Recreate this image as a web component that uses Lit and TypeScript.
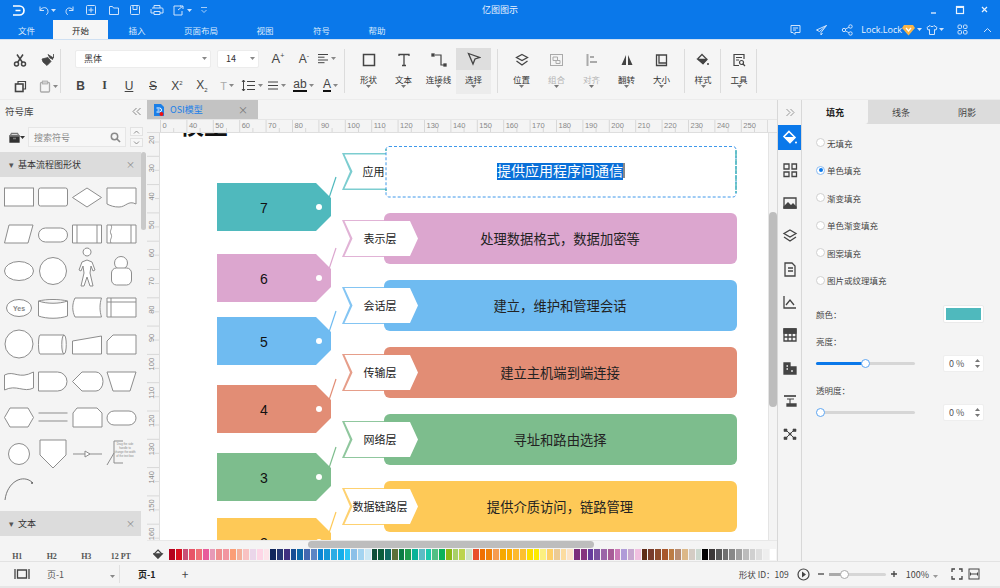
import { LitElement, html, css, svg } from 'lit'
import { customElement } from 'lit/decorators.js'

const ic = (w: number, h: number, body: unknown, cls = '') => html`<svg class=${cls} width=${w} height=${h} viewBox="0 0 ${w} ${h}" fill="none" stroke="currentColor" stroke-width="1.3">${body}</svg>`

const caret = html`<svg class="caret" width="5" height="3" viewBox="0 0 5 3"><path d="M0 0h5L2.5 3z" fill="currentColor"/></svg>`

const PALETTE = [
  ['#b5001c', '#d9101f', '#c94f76', '#e85467', '#ef6f76', '#e85c9b', '#e799b6', '#ef8e8e', '#f295a0', '#fb9e76', '#f4b09b', '#f9c2c2', '#ebd6ea', '#fdd6e6', '#fde4ea'],
  ['#10265c', '#243672', '#3f3080', '#174e94', '#0d69a8', '#4468b0', '#5b85c4', '#0a84d4', '#1496d8', '#2cace4', '#14aeea', '#2cc6f6', '#8cc0e8', '#a4d4f0', '#cce8f4'],
  ['#0f4e38', '#0a5c3a', '#0f6a60', '#5e7038', '#0a7c44', '#1f9c4c', '#0ab298', '#5cbcc4', '#1cc9ac', '#52bf84', '#0ab25a', '#8cb818', '#a8d068', '#bcd44c', '#cfe4c8'],
  ['#e8502a', '#f07000', '#f08008', '#f69c50', '#f6a800', '#fcae00', '#fdb92e', '#fdc030', '#fede00', '#fdec00', '#fcf080', '#fed068', '#eccb94', '#fcdca0', '#fde4c8'],
  ['#7c2f7c', '#85357f', '#663c9c', '#7a519f', '#9c66a8', '#a85c98', '#cc7cb8', '#b09cd8', '#c8a8d0', '#f0c0e0'],
  ['#5e2c18', '#783c2c', '#8f4c2c', '#a8582c', '#bc7c44', '#b88c70', '#dcb888', '#d4ccc4', '#ccd8d0'],
  ['#000000', '#3c3838', '#585858', '#707070', '#888888', '#a0a0a0', '#bcbcbc', '#d0d0d0', '#dedede', '#eeeeee', '#ffffff'],
]

const LAYERS = [
  { n: '6', tag: 254, label: '表示层', bar: 213, text: '处理数据格式，数据加密等', color: '#dca6cf' },
  { n: '5', tag: 317, label: '会话层', bar: 280, text: '建立，维护和管理会话', color: '#6fbbf1' },
  { n: '4', tag: 385, label: '传输层', bar: 347, text: '建立主机端到端连接', color: '#e28d75' },
  { n: '3', tag: 453, label: '网络层', bar: 414, text: '寻址和路由选择', color: '#7dbd8d' },
  { n: '2', tag: 518, label: '数据链路层', bar: 481, text: '提供介质访问，链路管理', color: '#fec957' },
]

const tag = (n: string, y: number, c: string) => svg`
  <path d="M217 ${y}H316L331 ${y + 15}V${y + 33}L316 ${y + 48}H217Z" fill=${c}/>
  <circle cx="319" cy=${y + 24} r="3" fill="#fff"/>
  <path d="M336 ${y - 6}L329 ${y + 15}" stroke=${c} stroke-width="1.2"/>
  <text x="264" y=${y + 30} class="num">${n}</text>`

const chevron = (y: number, c: string) => svg`
  <path d="M342 ${y}H410L418 ${y + 18.5}L410 ${y + 37}H342L350 ${y + 18.5}Z" fill=${c} opacity="0.85"/>
  <path d="M344.5 ${y + 1}H410L418 ${y + 18.5}L410 ${y + 36}H344.5L352.5 ${y + 18.5}Z" fill="#fff"/>`

const leftShapes = svg`
  <g fill="#fff" stroke="#8d8d8d" stroke-width="1">
    <rect x="4.5" y="89" width="29" height="18"/>
    <rect x="38.5" y="89" width="29" height="18" rx="2"/>
    <path d="M87 89l14.5 9.5L87 108 72.5 98.5Z"/>
    <path d="M107 89h29v16c-8-4-10 3-17 3-5 0-8-1-12-3Z"/>
    <path d="M9 126h24l-5 18H4.500Z"/>
    <rect x="38.5" y="129" width="29" height="14" rx="7"/>
    <path d="M72.5 126h29v18h-29ZM77 126v18M97 126v18"/>
    <path d="M107 126h29v18h-29ZM111 126c2 4-2 5 0 9s-2 5 0 9M131 126v18"/>
    <ellipse cx="19" cy="172" rx="14.5" ry="9.500"/>
    <circle cx="53" cy="172" r="13.5"/>
    <path d="M87 157a4 4 0 1 1 .1 0ZM82 163l5-2 5 2 3 8-2 1-2-5-1 7 3 13h-3l-3-9-3 9h-3l3-13-1-7-2 5-2-1Z"/>
    <circle cx="121" cy="164" r="6.5"/>
    <rect x="111.5" y="169" width="20" height="17" rx="5"/>
    <ellipse cx="19" cy="209" rx="12.5" ry="8.500"/>
    <path d="M38.5 202c8-2 21-2 29 0v15c-8 3-21 3-29 0ZM38.5 202c8 3 21 3 29 0"/>
    <path d="M75 199h26.500c-2 6-2 13 0 19H75c-3-6-3-13 0-19Z"/>
    <path d="M107 199h29v19h-29ZM107 203h29M111 199v19"/>
    <circle cx="19" cy="245" r="14"/>
    <path d="M40 236h24c3 0 3 19 0 19H40c-2 0-2-19 0-19ZM64 236c-3 0-3 19 0 19"/>
    <path d="M72.5 242l29-5v18h-29Z"/>
    <path d="M113 236h23v19h-29v-13Z"/>
    <path d="M4.5 276c10-5 14 5 29-3v16c-10 5-17-4-29 2Z"/>
    <path d="M38.5 273h19a9.500 9.500 0 0 1 0 19h-19Z"/>
    <path d="M82 273h14a7 9.500 0 0 1 0 19H82l-9.500-9.500Z"/>
    <path d="M107 273h29l-6 19h-17Z"/>
    <path d="M10 309h18l5.500 9.500L28 328H10l-5.500-9.500Z"/>
    <path d="M38.5 314h29M38.5 322h29" fill="none"/>
    <path d="M77 309h20l5 5v14h-29v-14Z"/>
    <rect x="107" y="312" width="29" height="14" rx="7"/>
    <circle cx="19" cy="355" r="10.5"/>
    <path d="M40 341h26v15l-13 13-13-13Z"/>
    <path d="M73 355h29" fill="none"/>
    <path d="M85 352v6l5-3Z"/>
    <path d="M123 342h-9v22h9M114 354l-7 12" fill="none"/>
  </g>
  <path d="M5 401c2-18 18-27 28-17" fill="none" stroke="#777"/>
  <circle cx="32" cy="384" r="1" fill="#666"/>
  <text x="19" y="212" class="yes">Yes</text>
  <g class="tiny">
    <text x="125" y="346">Drag the side</text>
    <text x="125" y="350">handle to</text>
    <text x="125" y="354">change the width</text>
    <text x="125" y="358">of the text box</text>
  </g>`

const RAIL_ICONS = [
  svg`<path d="M3 3h5v5H3zM11 3h4.500v5H11zM3 11h5v4.500H3zM11 11h4.500v4.500H11z"/>`,
  svg`<path d="M3 4h12v10H3z"/><path d="M3 13l4-4 3 3 2-2 3 3v1H3z" fill="currentColor"/>`,
  svg`<path d="M9 3l6 3.500-6 3.500-6-3.500zM3 10l6 4 6-4"/>`,
  svg`<path d="M4 3h7l3 3v10H4zM7 8h5M7 11h5"/>`,
  svg`<path d="M3 3v12h12"/><path d="M5 12l4-5 4 5"/>`,
  svg`<path d="M3 3h12v12H3zM3 7h12M7 7v8M11 7v8M3 11h12"/><path d="M3 3h12v4H3z" fill="currentColor"/>`,
  svg`<path d="M3 4h6v4h6v7H3z" fill="currentColor"/><path d="M5.500 7h1.500M5.500 10h1.500M11 11v2" stroke="#f4f4f4"/>`,
  svg`<path d="M3 4h12" stroke-width="1.700"/><path d="M6 7h7M9 7v5" stroke-width="1.100"/><path d="M6 12h9v2H6z" fill="currentColor"/>`,
  svg`<path d="M5 5l8 8M13 5l-8 8" stroke-width="1"/><path d="M3 4h3v2.500H3zM12 4h3v2.500h-3zM3 12h3v2.500H3zM12 12h3v2.500h-3zM8 8h2v2H8z" fill="currentColor" stroke-width=".6"/>`,
]

@customElement('app-root')
export class AppRoot extends LitElement {
  static styles = css`
    :host {
      display: block;
      width: 1000px;
      height: 588px;
      overflow: hidden;
      background: #f4f4f4;
      color: #333;
      font: 8.5px "Noto Sans CJK SC", "Liberation Sans", sans-serif;
    }
    .titlebar {
      height: 20px;
      background: #0a78ea;
      color: #fff;
      display: flex;
      align-items: center;
      position: relative;
    }
    .logo { margin-left: 13px; }
    .quick { display: flex; align-items: center; margin-left: 12px; color: #cfe3fb; }
    .quick > div { display: flex; align-items: center; gap: 2px; }
    .title { position: absolute; left: 0; right: 0; text-align: center; font-size: 9px; line-height: 20px; color: #e8f2fd; }
    .winbtns { margin-left: auto; display: flex; color: #e8f2fd; margin-right: 9px; gap: 13px; }
    .tabs {
      height: 19px;
      background: #0a78ea;
      display: flex;
      color: #dcebfc;
      align-items: stretch;
    }
    .tab { display: flex; align-items: center; justify-content: center; width: 53px; }
    .tab.on { background: #f6f6f6; color: #222; width: 55px; }
    .tab-r { margin-left: auto; display: flex; align-items: center; color: #cfe3fb; margin-right: 8px; }
    .tab-r .lock { color: #e8f2fd; font-size: 9px; font-family: "Open Sans", "Liberation Sans", sans-serif; }
    .ribbon {
      height: 61px;
      box-sizing: border-box;
      border-top: 1px solid #cfe0f2;
      border-bottom: 1px solid #ececec;
      background: #f5f5f5;
      display: flex;
      padding: 8px 0 5px;
      color: #444;
    }
    .group { border-right: 1px solid #dcdcdc; display: flex; height: 44px; margin-top: 1px; }
    .clip { width: 61px; display: grid; grid-template-columns: 28px 28px; grid-auto-rows: 26px; justify-items: center; align-items: center; padding-left: 6px; box-sizing: border-box; }
    .clip > * { margin-top: -4px; }
    .font { width: 284px; display: flex; flex-direction: column; padding-left: 14px; box-sizing: border-box; gap: 8px; }
    .frow { display: flex; align-items: center; height: 19px; flex: none; }
    .frow > * { flex: none; }
    .combo { height: 18px; background: #fff; border: 1px solid #ececec; border-radius: 2px; box-sizing: border-box; display: flex; align-items: center; justify-content: space-between; padding: 0 3px 0 8px; color: #333; font-size: 9px; }
    .combo .caret { color: #888; }
    .fb { display: flex; align-items: center; justify-content: center; color: #444; gap: 2px; }
    .fb .caret { color: #888; }
    .big { width: 35px; height: 46px; display: flex; flex-direction: column; align-items: center; margin-top: -1px; padding-top: 2px; box-sizing: border-box; color: #444; }
    .big .lab { margin-top: 3px; line-height: 12px; color: #333; }
    .big .caret { color: #777; }
    .big .ico { height: 20px; display: flex; align-items: center; }
    .big.on { background: #ececec; }
    .big.on .ico { background: #dedede; width: 100%; justify-content: center; height: 22px; margin-top: -2px; }
    .big.off { color: #aaa; }
    .big.off .lab { color: #b4b4b4; }
    .shapesg { padding-left: 6px; width: 153px; box-sizing: border-box; }
    .arrange { padding-left: 6px; width: 187px; box-sizing: border-box; }
    .one { width: 36px; justify-content: center; padding-left: 1px; box-sizing: border-box; }
    .main { height: 461px; display: flex; }
    .lib { width: 147px; position: relative; flex: none; overflow: hidden; }
    .libtop { height: 22px; display: flex; align-items: center; justify-content: space-between; padding: 0 5px; font-size: 9.5px; color: #444; }
    .search { height: 30px; display: flex; align-items: center; padding-left: 9px; }
    .sbox { width: 98px; height: 20px; margin-left: 3px; background: #f7f7f7; border: 1px solid #e6e6e6; box-sizing: border-box; color: #8a8a8a; display: flex; align-items: center; justify-content: space-between; padding: 0 4px 0 5px; font-size: 9px; }
    .updn { display: flex; flex-direction: column; margin-left: 4px; gap: 2px; color: #777; }
    .updn div { width: 13px; height: 9px; border: 1px solid #e2e2e2; display: flex; align-items: center; justify-content: center; box-sizing: border-box; background: #f7f7f7; }
    .sec { width: 141px; height: 25px; background: #dcdcdc; box-sizing: border-box; padding: 0 6px 0 9px; display: flex; align-items: center; color: #333; font-size: 9px; gap: 4px; }
    .sec .x { margin-left: auto; color: #888; font-size: 9px; }
    .sec .tri { color: #555; }
    .shapes { display: block; }
    .libthumb { position: absolute; right: 1px; top: 52px; width: 5px; height: 78px; background: #c9c9c9; border-radius: 3px; }
    .hs { width: 141px; display: flex; padding-top: 17px; font-size: 8px; line-height: 8px; color: #555; font-weight: 700; font-family: "Liberation Serif", serif; }
    .hs span { width: 34.5px; text-align: center; }
    .center { width: 630px; flex: none; display: flex; flex-direction: column; }
    .doctabs { height: 19px; display: flex; background: #f4f4f4; }
    .doctab { width: 111px; background: #c3c3c3; display: flex; align-items: center; padding-left: 7px; gap: 6px; box-sizing: border-box; color: #1a7fe8; font-size: 9px; }
    .doctab .x { margin-left: auto; margin-right: 10px; color: #777; font-size: 10px; }
    .hr { height: 14px; background: #f4f4f4; border-top: 1px solid #e6e6e6; border-bottom: 1px solid #dedede; box-sizing: border-box; }
    .hr svg { display: block; }
    .midrow { height: 407px; display: flex; }
    .vr { width: 13px; flex: none; background: #f4f4f4; border-right: 1px solid #dedede; box-sizing: border-box; }
    .vr svg { display: block; }
    .canvas { width: 608px; height: 407px; background: #fff; flex: none; overflow: hidden; }
    .canvas svg { display: block; }
    .num { font: 14px "Liberation Sans", sans-serif; text-anchor: middle; fill: #111; }
    .lbl { font: 11px "Noto Sans CJK SC", sans-serif; text-anchor: middle; fill: #222; }
    .bartxt { font: 13.3px "Noto Sans CJK SC", sans-serif; text-anchor: middle; fill: #222; }
    .seltxt { font-size: 14px; fill: #fff; }
    .heading { font: 700 24px "Noto Sans CJK SC", sans-serif; fill: #111; }
    .yes { font: 700 7px "Liberation Sans", sans-serif; text-anchor: middle; fill: #888; stroke: none; }
    .tiny text { font: 2.8px "Liberation Sans", sans-serif; text-anchor: middle; fill: #888; }
    .vs { width: 9px; flex: none; background: #f4f4f4; border-left: 1px solid #e4e4e4; box-sizing: border-box; position: relative; }
    .vthumb { position: absolute; left: 0; top: 79px; width: 8px; height: 195px; background: #bdbdbd; border-radius: 4px; }
    .hscroll { height: 8px; background: #f4f4f4; border-top: 1px solid #e8e8e8; position: relative; box-sizing: border-box; }
    .hthumb { position: absolute; left: 161px; top: 0; width: 286px; height: 7px; background: #bdbdbd; border-radius: 4px; }
    .palrow { height: 13px; display: flex; align-items: center; padding-bottom: 1px; box-sizing: border-box; }
    .palicon { width: 22px; display: flex; justify-content: center; color: #444; }
    .pal { display: flex; gap: 1px; }
    .pal i { display: block; width: 5.76px; height: 11px; }
    .rail { width: 25px; flex: none; border-left: 1px solid #d8d8d8; border-right: 1px solid #d8d8d8; box-sizing: border-box; display: flex; flex-direction: column; align-items: center; color: #444; }
    .rail .chev { height: 25px; display: flex; align-items: center; color: #999; }
    .rail .act { width: 100%; height: 25px; background: #0a78ea; color: #fff; display: flex; justify-content: center; align-items: center; margin-bottom: 3px; }
    .rail .ri { height: 33.1px; width: 100%; display: flex; align-items: center; justify-content: center; }
    .panel { flex: 1; min-width: 0; }
    .ptabs { display: flex; height: 24px; background: #dcdcdc; }
    .ptabs div { flex: 1; display: flex; align-items: center; justify-content: center; font-size: 9px; color: #444; }
    .ptabs .on { background: #f4f4f4; font-weight: 700; color: #222; border-bottom-right-radius: 3px; }
    .radios { padding: 5px 0 0 14px; }
    .rad { height: 27.5px; display: flex; align-items: center; gap: 2px; color: #444; }
    .dot { width: 7px; height: 7px; border: 1px solid #d0d0d0; border-radius: 50%; background: #fff; flex: none; position: relative; }
    .dot.on { border-color: #8dbdf2; }
    .dot.on::after { content: ''; position: absolute; left: 1.5px; top: 1.5px; width: 4px; height: 4px; border-radius: 50%; background: #0a78ea; }
    .prop { display: flex; align-items: center; justify-content: space-between; padding: 0 16px 0 14px; color: #444; }
    .swatch { width: 41px; height: 18px; background: #fff; border: 1px solid #eaeaea; border-radius: 2px; box-sizing: border-box; padding: 2px; }
    .swatch div { height: 100%; background: #4fb9bd; }
    .cap { padding-left: 14px; color: #444; line-height: 12px; }
    .slide { width: 99px; height: 3px; background: #d6d6d6; border-radius: 2px; position: relative; }
    .slide .fill { height: 100%; background: #0a78ea; border-radius: 2px; }
    .slide .knob { position: absolute; top: -3px; width: 9px; height: 9px; box-sizing: border-box; border: 1.5px solid #5ea6f2; border-radius: 50%; background: #fff; }
    .num-in { width: 41px; height: 17px; background: #fff; border: 1px solid #eee; border-radius: 2px; box-sizing: border-box; display: flex; align-items: center; padding-left: 5px; color: #555; font-size: 9px; }
    .num-in .spin { margin-left: auto; margin-right: 3px; display: flex; flex-direction: column; gap: 3px; color: #777; }
    .status { height: 25px; background: #f4f4f4; border-top: 1px solid #e2e2e2; box-sizing: border-box; display: flex; align-items: center; color: #444; }
    .status .s1 { width: 120px; display: flex; align-items: center; box-sizing: border-box; padding-left: 14px; border-right: 1px solid #e0e0e0; height: 18px; }
    .pg { font-size: 9px; color: #555; margin-left: 17px; }
    .pg.cur { color: #222; margin-left: 18px; font-weight: 700; }
    .stat-r { margin-left: auto; display: flex; align-items: center; margin-right: 20px; }
    .plus { margin-left: 26px; font-size: 12px; color: #444; line-height: 1; }
    .zoomtrack { width: 57px; height: 3px; background: #d6d6d6; position: relative; margin: 0 4px; border-radius: 2px; }
    .zoomtrack .f { width: 15px; height: 100%; background: #aaa; }
    .zoomtrack .k { position: absolute; left: 11px; top: -3px; width: 7px; height: 7px; border: 1px solid #aaa; background: #fff; border-radius: 50%; }
    .foot { height: 2px; background: #e6e6e6; }
  `

  private hruler() {
    const labels = [0, 40, 50, 60, 70, 80, 90, 100, 110, 120, 130, 140, 150, 160, 170, 180, 190, 200, 210, 220, 230, 240, 250, 260]
    return html`<svg width="621" height="13" viewBox="147 120 621 13">
      ${labels.map((l, i) => {
        const x = 160.5 + i * 26.4
        return svg`<path d="M${x} 120V132M${x + 13.2} 128V132" stroke="#d8d8d8" fill="none"/>
          <text x=${x + 2} y="128" font-size="7.5" fill="#888" font-family="Liberation Sans">${l}</text>`
      })}
    </svg>`
  }

  private vruler() {
    const labels = [20, 30, 40, 50, 60, 70, 80, 90, 100, 110, 120, 130, 140, 150, 160]
    return html`<svg width="12" height="407" viewBox="147 133 12 407">
      ${labels.map((l, i) => {
        const y = 128 + i * 28.3
        return svg`<path d="M147 ${y}H159M155 ${y + 14}H159" stroke="#d8d8d8" fill="none"/>
          <text transform="translate(154 ${y + 16}) rotate(-90)" font-size="7.5" fill="#888" font-family="Liberation Sans">${l}</text>`
      })}
    </svg>`
  }

  private canvas() {
    return html`<svg width="608" height="407" viewBox="160 133 608 407">
      <text x="180" y="134" class="heading">模型</text>
      ${tag('7', 183, '#4fb9bd')}
      <path d="M342 153H392V190H342L350 171.5Z" fill="#7ccdd0"/>
      <path d="M344.5 154.5H392V188.500H344.5L352.5 171.5Z" fill="#fff"/>
      <rect x="386" y="146.5" width="350" height="50.5" rx="3" fill="#fff" stroke="#3f98ea" stroke-dasharray="3 2"/>
      <path d="M736 150V193" stroke="#4fb9bd" stroke-dasharray="8 1 6 1" stroke-width="1.5"/>
      <circle cx="386" cy="150" r="1" fill="#4fb9bd"/><circle cx="386" cy="190" r="1" fill="#4fb9bd"/>
      <text x="373.5" y="176" class="lbl">应用</text>
      <rect x="497" y="163" width="126" height="17" fill="#0a70d8"/>
      <rect x="623" y="163" width="2" height="15" fill="#888"/>
      <text x="560" y="176" class="bartxt seltxt">提供应用程序间通信</text>
      ${LAYERS.map(l => svg`
        ${tag(l.n, l.tag, l.color)}
        <rect x="384" y=${l.bar} width="353" height="51" rx="6" fill=${l.color}/>
        ${chevron(l.bar + 7, l.color)}
        <text x="380" y=${l.bar + 30} class="lbl">${l.label}</text>
        <text x="560" y=${l.bar + 31} class="bartxt">${l.text}</text>`)}
    </svg>`
  }

  render() {
    const ribbonBig = (label: string, icon: unknown, cls = '') => html`<div class="big ${cls}"><div class="ico">${icon}</div><div class="lab">${label}</div>${caret}</div>`
    const fb = (w: number, body: unknown) => html`<div class="fb" style="width:${w}px">${body}</div>`
    return html`
      <div class="titlebar">
        <svg class="logo" width="12" height="11" viewBox="0 0 12 11" fill="none" stroke="#fff" stroke-width="1.7"><path d="M0 1h6.500a4.500 4.500 0 0 1 0 9H0M2.500 5.500h5"/></svg>
        <div class="quick">
          <div style="width:27px">${ic(12, 12, svg`<path d="M3 2.500v4h4M3 6.500c2-4 8-4 8 1 0 2-1 3-2 3" stroke-width="1"/>`)}${caret}</div>
          <div style="width:21px">${ic(12, 12, svg`<path d="M9 2.500v4H5M9 6.500C7 2.500 2 3.500 2 7.500c0 2 1 3 2 3" stroke-width="1"/>`)}</div>
          <div style="width:23px">${ic(12, 12, svg`<rect x="1.500" y="1.500" width="9" height="9" rx="1" stroke-width="1"/><path d="M6 3.500v5M3.500 6h5" stroke-width="1"/>`)}</div>
          <div style="width:21px">${ic(12, 12, svg`<path d="M1.500 2.500h3l1 1.500h5v6.500h-9z" stroke-width="1"/>`)}</div>
          <div style="width:21px">${ic(12, 12, svg`<rect x="1.500" y="1.500" width="9" height="9" rx="1" stroke-width="1"/><path d="M4 1.500v4h4v-4" stroke-width="1"/>`)}</div>
          <div style="width:22px">${ic(14, 12, svg`<path d="M4 4V1.500h6V4M2 4h10a1 1 0 0 1 1 1v4h-3M4 9H1V5M4 7.500h6v3H4z" stroke-width="1"/>`)}</div>
          <div style="width:28px">${ic(13, 12, svg`<path d="M9 2H2v9h8V7M6 6l5-4M8 2h3v3" stroke-width="1"/>`)}${caret}</div>
          <div>${ic(8, 8, svg`<path d="M1 1.500h6M1.500 4l2.500 2.500L6.500 4" stroke-width=".8"/>`)}</div>
        </div>
        <div class="title">亿图图示</div>
        <div class="winbtns">
          ${ic(12, 12, svg`<path d="M2 9h5"/>`)}
          ${ic(12, 12, svg`<rect x="2.500" y="2.500" width="7" height="7" stroke-width="1.200"/><path d="M2.500 3h7" stroke-width="2"/>`)}
          ${ic(12, 12, svg`<path d="M3 3l5 5M8 3l-5 5" stroke-width="1.200"/>`)}
        </div>
      </div>

      <div class="tabs">
        <div class="tab">文件</div>
        <div class="tab on">开始</div>
        <div class="tab" style="width:58px">插入</div>
        <div class="tab" style="width:70px">页面布局</div>
        <div class="tab" style="width:58px">视图</div>
        <div class="tab" style="width:55px">符号</div>
        <div class="tab" style="width:56px">帮助</div>
        <div class="tab-r">
          ${ic(13, 12, svg`<path d="M2 1.500h9v7H6v2L4 8.500H2zM4 4h5M4 6h3" stroke-width="1"/>`)}
          <span style="width:13px"></span>
          ${ic(13, 12, svg`<path d="M11.500 1.500L1.500 6l3 1.500 7-6L6 8.500v2.500l1.500-2" stroke-width="1"/>`)}
          <span style="width:13px"></span>
          ${ic(12, 12, svg`<circle cx="3" cy="6" r="1.700" stroke-width="1"/><circle cx="9.500" cy="2.500" r="1.700" stroke-width="1"/><circle cx="9.500" cy="9.500" r="1.700" stroke-width="1"/><path d="M4.500 5L8 3.300M4.500 7L8 8.700" stroke-width=".9"/>`)}
          <span style="width:8px"></span>
          <span class="lock">Lock.Lock</span>
          ${ic(13, 12, svg`<path d="M2 1h9l2 3-6.500 7.500L0 4Z" fill="#f6b44a" stroke="none"/><path d="M4 4l2.500 3L9 4" stroke="#fff" stroke-width="1.200"/>`)}
          <span style="width:2px"></span>${caret}
          <span style="width:4px"></span>
          ${ic(12, 12, svg`<path d="M4 1.500L1 3.500l1 2.500 1.500-.5v5h5v-5l1.500.5 1-2.500-3-2c-.5 1.500-3.500 1.500-4 0Z" stroke-width="1"/>`)}
          <span style="width:1px"></span>${caret}
          <span style="width:13px"></span>
          ${ic(11, 11, svg`<rect x="1" y="1" width="3.500" height="3.500" rx="1" stroke-width="1"/><rect x="6.500" y="1" width="3.500" height="3.500" rx="1" stroke-width="1"/><rect x="1" y="6.500" width="3.500" height="3.500" rx="1" stroke-width="1"/><rect x="6.500" y="6.500" width="3.500" height="3.500" rx="1" stroke-width="1"/>`)}
          <span style="width:15px"></span>
          ${ic(9, 6, svg`<path d="M1 5l3.500-3.500L8 5" stroke-width="1"/>`)}
        </div>
      </div>

      <div class="ribbon">
        <div class="group clip">
          ${ic(14, 14, svg`<circle cx="3.500" cy="11" r="2" stroke-width="1.500"/><circle cx="10.500" cy="11" r="2" stroke-width="1.500"/><path d="M4.500 9.500L10 1.500M9.500 9.500L4 1.500" stroke-width="1.500"/>`)}
          ${ic(14, 14, svg`<path d="M12.500 1v4L11 4 7 1.500 9 5l3 1.500M1 6l6-1.500 3 4-4 4-4-3.500z" fill="currentColor" stroke-width=".8"/>`)}
          ${ic(13, 13, svg`<path d="M4 4V1.500h7.500V9H9" stroke-width="1.200"/><rect x="1.500" y="4" width="7.500" height="7.500" stroke-width="1.600"/>`)}
          <div class="fb" style="color:#aaa">${ic(12, 13, svg`<rect x="1.500" y="2.500" width="9" height="9.500" rx="1"/><rect x="3.500" y="1" width="5" height="3" fill="#d0d0d0" stroke-width=".8"/>`)}${caret}</div>
        </div>
        <div class="group font">
          <div class="frow">
            <div class="combo" style="width:136px">黑体${caret}</div>
            <div class="combo" style="width:42px;margin-left:6px">14${caret}</div>
            ${fb(38, html`<span style="font-size:13px;font-family:'Liberation Sans'">A<sup style="font-size:7px">+</sup></span>`)}
            ${fb(14, html`<span style="font-size:12px;font-family:'Liberation Sans'">A<sup style="font-size:7px">-</sup></span>`)}
            ${fb(30, html`${ic(12, 11, svg`<path d="M1 1.500h10M1 4.200h6.500M1 7h10M1 9.700h6.500" stroke-width="1"/>`)}${caret}`)}
          </div>
          <div class="frow" style="margin-left:-6px">
            ${fb(23, html`<b style="font:700 12px 'Liberation Sans'">B</b>`)}
            ${fb(25, html`<i style="font:700 12px 'Liberation Serif'">I</i>`)}
            ${fb(24, html`<span style="font:12px 'Liberation Sans';text-decoration:underline">U</span>`)}
            ${fb(24, html`<span style="font:12px 'Liberation Sans';text-decoration:line-through">S</span>`)}
            ${fb(24, html`<span style="font:12px 'Liberation Sans'">X<sup style="font-size:6px">2</sup></span>`)}
            ${fb(26, html`<span style="font:12px 'Liberation Sans'">X<sub style="font-size:6px">2</sub></span>`)}
            ${fb(24, html`<span style="font:11px 'Liberation Sans';color:#aaa">T</span>${caret}`)}
            ${fb(25, html`${ic(15, 13, svg`<path d="M6 2.500h8M6 6.500h8M6 10.500h8M2.500 1v11M1 3l1.500-2L4 3M1 10l1.500 2L4 10" stroke-width="1"/>`)}${caret}`)}
            ${fb(25, html`${ic(12, 11, svg`<path d="M1 2h10M1 5.500h10M1 9h10" stroke-width="1"/>`)}${caret}`)}
            ${fb(29, html`<span style="font:12px 'Liberation Sans';border-bottom:2px solid #111;line-height:11px">ab</span>${caret}`)}
            ${fb(25, html`<span style="font:12px 'Liberation Sans';border-bottom:2px solid #111;line-height:11px">A</span>${caret}`)}
          </div>
        </div>
        <div class="group shapesg">
          ${ribbonBig('形状', ic(14, 14, svg`<rect x="1.500" y="1.500" width="11" height="11" stroke-width="1.500"/>`))}
          ${ribbonBig('文本', ic(14, 14, svg`<path d="M2 3V1.500h10V3M7 1.500V12.500M5 12.500h4" stroke-width="1.300"/>`))}
          ${ribbonBig('连接线', ic(16, 14, svg`<path d="M4 2h6v10h3" stroke-width="1.200"/><rect x="1" y="1" width="2" height="2" fill="currentColor"/><rect x="13" y="11" width="2" height="2" fill="currentColor"/>`))}
          ${ribbonBig('选择', ic(14, 14, svg`<path d="M1.500 1.500l11 4-4.500 1.500-2 5z" stroke-width="1.300"/>`), 'on')}
        </div>
        <div class="group arrange">
          ${ribbonBig('位置', ic(14, 14, svg`<path d="M7 1.500l5.500 3-5.500 3-5.500-3zM1.500 8l5.500 4 5.500-4" stroke-width="1.300"/>`))}
          ${ribbonBig('组合', ic(15, 14, svg`<rect x="1.500" y="1.500" width="12" height="11" stroke-width="1"/><path d="M4 4h4.500v3.500H4zM7 7.500h4v3H7z" stroke-width="1"/>`), 'off')}
          ${ribbonBig('对齐', ic(12, 14, svg`<path d="M1.500 1v12M4 4h4M4 9h7" stroke-width="2"/>`), 'off')}
          ${ribbonBig('翻转', ic(14, 14, svg`<path d="M6 2v10H1.500zM8 2v10h4.500z" fill="currentColor" stroke="none"/>`))}
          ${ribbonBig('大小', ic(13, 14, svg`<path d="M1.500 2v10.500h10V2zM4 2v8h7.500" stroke-width="1.300"/>`))}
        </div>
        <div class="group one">
          ${ribbonBig('样式', ic(14, 14, svg`<path d="M6 1.500l5 5-4 4-5-5z" stroke-width="1.300"/><path d="M2 6.500h8L7 10.500z" fill="currentColor"/><circle cx="12" cy="11" r="1" fill="currentColor" stroke="none"/>`))}
        </div>
        <div class="group one">
          ${ribbonBig('工具', ic(14, 14, svg`<path d="M12 6V1.500H2v11h5M4 4.500h6M4 7h3" stroke-width="1.200"/><circle cx="9.500" cy="9.500" r="2" stroke-width="1.200"/><path d="M11 11l2 2" stroke-width="1.300"/>`))}
        </div>
      </div>

      <div class="main">
        <div class="lib">
          <div class="libtop">符号库 ${ic(10, 9, svg`<path d="M4.500 1L1 4.500 4.500 8M8.500 1L5 4.500 8.500 8" stroke="#888" stroke-width="1"/>`)}</div>
          <div class="search">
            ${ic(11, 11, svg`<path d="M1 4h9v6H1z" fill="currentColor"/><path d="M2.500 1.500h6L10 4H1zM4 6.500h3" stroke="#777"/>`)}${caret}
            <div class="sbox">搜索符号 ${ic(11, 11, svg`<circle cx="4.500" cy="4.500" r="3.200" stroke-width="1.500"/><path d="M7 7l3 3" stroke-width="1.700"/>`)}</div>
            <div class="updn">
              <div>${ic(7, 4, svg`<path d="M1 3.500l2.500-2.500 2.500 2.500" stroke-width=".8"/>`)}</div>
              <div>${ic(7, 4, svg`<path d="M1 .5l2.500 2.500L6 .5" stroke-width=".8"/>`)}</div>
            </div>
          </div>
          <div class="sec"><span class="tri">▾</span>基本流程图形状<span class="x">×</span></div>
          <svg class="shapes" width="141" height="334" viewBox="0 78 141 334">${leftShapes}</svg>
          <div class="sec"><span class="tri">▾</span>文本<span class="x">×</span></div>
          <div class="hs"><span>H1</span><span>H2</span><span>H3</span><span>12 PT</span></div>
          <div class="libthumb"></div>
        </div>

        <div class="center">
          <div class="doctabs">
            <div class="doctab">
              <svg width="10" height="12" viewBox="0 0 10 12"><path d="M0 0h7l3 3v9H0z" fill="#1a7fe8"/><path d="M2.500 4h3a2 2 0 0 1 0 4h-3M3.500 6h2" stroke="#fff" fill="none"/><circle cx="7.500" cy="10" r="2" fill="#f01010"/></svg>
              OSI模型
              <span class="x">×</span>
            </div>
          </div>
          <div class="hr">${this.hruler()}</div>
          <div class="midrow">
            <div class="vr">${this.vruler()}</div>
            <div class="canvas">${this.canvas()}</div>
            <div class="vs"><div class="vthumb"></div></div>
          </div>
          <div class="hscroll"><div class="hthumb"></div></div>
          <div class="palrow">
            <div class="palicon">${ic(11, 11, svg`<path d="M5 1l4 4-4 4-4-4z" stroke-width="1.100"/><path d="M1 5h8L5 9z" fill="currentColor"/>`)}</div>
            <div class="pal">
              ${PALETTE.flat().map(c => html`<i style="background:${c}"></i>`)}
            </div>
          </div>
        </div>

        <div class="rail">
          <div class="chev">${ic(10, 9, svg`<path d="M1.500 1L5 4.500 1.500 8M5.500 1L9 4.500 5.500 8" stroke-width="1"/>`)}</div>
          <div class="act">${ic(16, 16, svg`<path d="M7 1.500l6 6-5 5-6-6z" stroke="#fff" stroke-width="1.600"/><path d="M2 7h11l-5 5.500z" fill="#fff" stroke="none"/><circle cx="14" cy="12.500" r="1" fill="#fff" stroke="none"/>`)}</div>
          ${RAIL_ICONS.map(i => html`<div class="ri">${ic(18, 18, i)}</div>`)}
        </div>

        <div class="panel">
          <div class="ptabs"><div class="on">填充</div><div>线条</div><div>阴影</div></div>
          <div class="radios">
            ${['无填充', '单色填充', '渐变填充', '单色渐变填充', '图案填充', '图片或纹理填充'].map((r, i) => html`<div class="rad"><span class="dot ${i === 1 ? 'on' : ''}"></span>${r}</div>`)}
          </div>
          <div class="prop" style="margin-top:11px">颜色：<div class="swatch"><div></div></div></div>
          <div class="cap" style="margin-top:12px">亮度：</div>
          <div class="prop" style="margin-top:8px">
            <div class="slide"><div class="fill" style="width:49px"></div><div class="knob" style="left:44.5px"></div></div>
            <div class="num-in">0 %<div class="spin">${ic(5, 3, svg`<path d="M0 3h5L2.500 0z" fill="currentColor" stroke="none"/>`)}${caret}</div></div>
          </div>
          <div class="cap" style="margin-top:12px">透明度：</div>
          <div class="prop" style="margin-top:8px">
            <div class="slide"><div class="knob" style="left:0"></div></div>
            <div class="num-in">0 %<div class="spin">${ic(5, 3, svg`<path d="M0 3h5L2.500 0z" fill="currentColor" stroke="none"/>`)}${caret}</div></div>
          </div>
        </div>
      </div>

      <div class="status">
        <div class="s1">
          ${ic(16, 12, svg`<path d="M1 1v10M15 1v10M3.500 2h9v8h-9z" stroke-width="1.300"/>`)}
          <span class="pg">页-1</span>
          <span style="margin-left:auto;margin-right:4px;color:#888">${caret}</span>
        </div>
        <span class="pg cur">页-1</span>
        <span class="plus">+</span>
        <div class="stat-r">
          <span>形状 ID：109</span>
          <span style="width:8px"></span>
          ${ic(13, 13, svg`<circle cx="6.500" cy="6.500" r="5.500" stroke-width="1.200"/><path d="M5 3.500l4 3-4 3z" fill="currentColor" stroke="none"/>`)}
          <span style="width:7px"></span>
          ${ic(8, 8, svg`<path d="M1 4h6"/>`)}
          <div class="zoomtrack"><div class="f"></div><div class="k"></div></div>
          ${ic(8, 8, svg`<path d="M1 4h6M4 1v6"/>`)}
          <span style="width:8px"></span>
          <span style="font-size:9px">100%</span>
          <span style="width:4px"></span><span style="color:#999">${caret}</span>
          <span style="width:13px"></span>
          ${ic(12, 12, svg`<path d="M1 4V1h3M8 1h3v3M11 8v3H8M4 11H1V8" stroke-width="1.300"/>`)}
          <span style="width:5px"></span>
          ${ic(12, 12, svg`<rect x="1" y="1" width="10" height="10" stroke-width="1"/><path d="M2.500 6h7M2.500 4.500v3M9.500 4.500v3" stroke-width="1"/>`)}
        </div>
      </div>
      <div class="foot"></div>
    `
  }
}
